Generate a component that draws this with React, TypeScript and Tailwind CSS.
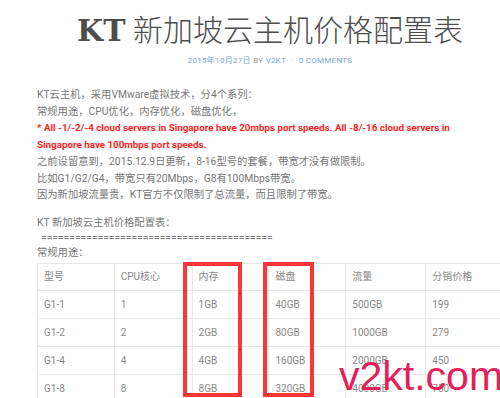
const rows = [
  ['G1-1', '1', '1GB', '40GB', '500GB', '199'],
  ['G1-2', '2', '2GB', '80GB', '1000GB', '279'],
  ['G1-4', '4', '4GB', '160GB', '2000GB', '450'],
  ['G1-8', '8', '8GB', '320GB', '4000GB', '750'],
];

const head = ['型号', 'CPU核心', '内存', '磁盘', '流量', '分销价格'];
const widths = ['w-[77px]', 'w-[78px]', 'w-[77px]', 'w-[77px]', 'w-[80px]', 'w-[77px]'];

const App = () => (
  <div className="relative w-[500px] h-[398px] overflow-hidden bg-white font-['Roboto','Noto_Sans_CJK_SC',sans-serif]">
    <div className="ml-[37px] w-[466px]">
      <h1 className="pt-[10px] text-center text-[30px] leading-[36px] text-[#4d4d4d] whitespace-nowrap">
        <span className="font-bold font-['DejaVu_Serif',serif]">KT</span>{' '}
        <span className="font-light font-['Noto_Sans_CJK_SC',sans-serif]">新加坡云主机价格配置表</span>
      </h1>
      <div className="mt-[6px] text-center text-[8px] leading-[12px] tracking-[0.3px] uppercase">
        <span className="text-[#76a7d9]">2015年10月27日</span>
        <span className="text-[#999]"> BY </span>
        <span className="text-[#76a7d9]">V2KT</span>
        <span className="text-[#ccc] mx-[5px]">·</span>
        <span className="text-[#76a7d9]">0 COMMENTS</span>
      </div>

      <div className="mt-[20px] text-[10.3px] leading-[16.7px] text-[#777]">
        <p>KT云主机，采用VMware虚拟技术，分4个系列：</p>
        <p>常规用途，CPU优化，内存优化，磁盘优化，</p>
        <p className="font-bold text-[9.8px] text-[#ff1f1f] whitespace-nowrap">
          * All -1/-2/-4 cloud servers in Singapore have 20mbps port speeds. All -8/-16 cloud servers in
          <br />
          Singapore have 100mbps port speeds.
        </p>
        <p>之前设留意到，2015.12.9日更新，8-16型号的套餐，带宽才没有做限制。</p>
        <p>比如G1/G2/G4，带宽只有20Mbps，G8有100Mbps带宽。</p>
        <p>因为新加坡流量贵，KT官方不仅限制了总流量，而且限制了带宽。</p>
      </div>

      <div className="mt-[11px] text-[10.3px] leading-[15px] text-[#777]">
        <p>KT 新加坡云主机价格配置表：</p>
        <p className="pl-[4px]">=========================================</p>
        <p>常规用途：</p>
      </div>

      <table className="mt-[3px] border-collapse text-[10px] text-[#888] table-fixed">
        <tbody>
          <tr>
            {head.map((h, i) => (
              <td key={h} className={`${widths[i]} h-[27px] border border-[#e8e8e8] px-[6px]`}>
                {h}
              </td>
            ))}
          </tr>
          {rows.map((r) => (
            <tr key={r[0]}>
              {r.map((c, i) => (
                <td key={i} className={`${widths[i]} h-[28px] border border-[#e8e8e8] px-[6px]`}>
                  {c}
                </td>
              ))}
            </tr>
          ))}
        </tbody>
      </table>
    </div>

    {/* red highlight boxes */}
    <div className="absolute left-[183px] top-[262px] w-[59px] h-[135px] border-[4px] border-[#ff3535]" />
    <div className="absolute left-[263px] top-[262px] w-[51px] h-[135px] border-[4px] border-[#ff3535]" />

    {/* watermark */}
    <div className="absolute left-[339px] top-[352px] text-[41px] leading-[48px] text-[#e4205c] font-['Liberation_Sans',sans-serif]">
      v2kt.com
    </div>
  </div>
);

export default App;
